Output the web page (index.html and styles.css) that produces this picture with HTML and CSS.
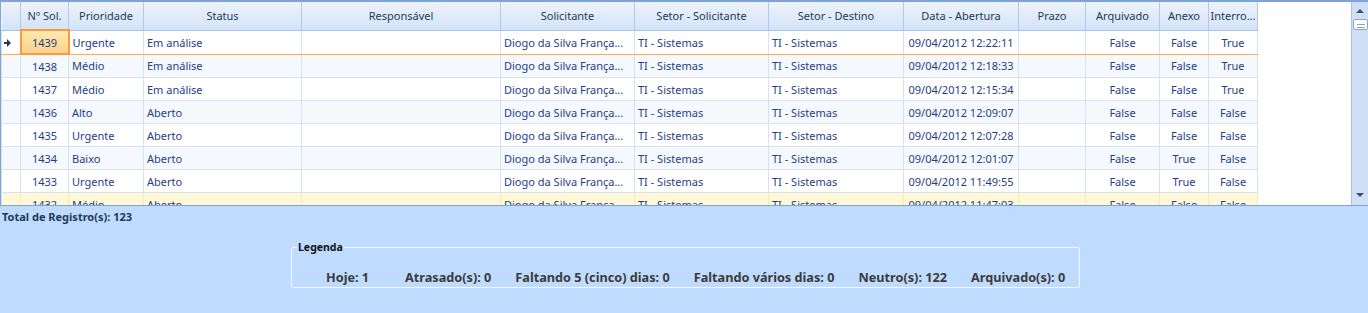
FILE: index.html
```html
<!DOCTYPE html>
<html>
<head>
<meta charset="utf-8">
<title>Solicitações</title>
<link rel="stylesheet" href="styles.css">
</head>
<body>
<div class="grid">
  <div class="view">
    <table class="data">
      <colgroup>
        <col style="width:19px"><col style="width:48px"><col style="width:75px"><col style="width:158px">
        <col style="width:199px"><col style="width:134px"><col style="width:134px"><col style="width:135px">
        <col style="width:115px"><col style="width:67px"><col style="width:74px"><col style="width:49px"><col style="width:49px">
      </colgroup>
      <thead>
        <tr>
          <th></th><th>Nº Sol.</th><th>Prioridade</th><th>Status</th><th>Responsável</th><th>Solicitante</th>
          <th>Setor - Solicitante</th><th>Setor - Destino</th><th>Data - Abertura</th><th>Prazo</th>
          <th>Arquivado</th><th>Anexo</th><th>Interro...</th>
        </tr>
      </thead>
      <tbody>
        <tr class="focused">
          <td class="ind"><span class="arrow"></span></td><td class="c cur">1439</td><td>Urgente</td><td>Em análise</td><td></td>
          <td>Diogo da Silva França...</td><td>TI - Sistemas</td><td>TI - Sistemas</td><td class="c">09/04/2012 12:22:11</td>
          <td></td><td class="c">False</td><td class="c">False</td><td class="c">True</td>
        </tr>
        <tr class="alt">
          <td class="ind"></td><td class="c">1438</td><td>Médio</td><td>Em análise</td><td></td>
          <td>Diogo da Silva França...</td><td>TI - Sistemas</td><td>TI - Sistemas</td><td class="c">09/04/2012 12:18:33</td>
          <td></td><td class="c">False</td><td class="c">False</td><td class="c">True</td>
        </tr>
        <tr>
          <td class="ind"></td><td class="c">1437</td><td>Médio</td><td>Em análise</td><td></td>
          <td>Diogo da Silva França...</td><td>TI - Sistemas</td><td>TI - Sistemas</td><td class="c">09/04/2012 12:15:34</td>
          <td></td><td class="c">False</td><td class="c">False</td><td class="c">True</td>
        </tr>
        <tr class="alt">
          <td class="ind"></td><td class="c">1436</td><td>Alto</td><td>Aberto</td><td></td>
          <td>Diogo da Silva França...</td><td>TI - Sistemas</td><td>TI - Sistemas</td><td class="c">09/04/2012 12:09:07</td>
          <td></td><td class="c">False</td><td class="c">False</td><td class="c">False</td>
        </tr>
        <tr>
          <td class="ind"></td><td class="c">1435</td><td>Urgente</td><td>Aberto</td><td></td>
          <td>Diogo da Silva França...</td><td>TI - Sistemas</td><td>TI - Sistemas</td><td class="c">09/04/2012 12:07:28</td>
          <td></td><td class="c">False</td><td class="c">False</td><td class="c">False</td>
        </tr>
        <tr class="alt">
          <td class="ind"></td><td class="c">1434</td><td>Baixo</td><td>Aberto</td><td></td>
          <td>Diogo da Silva França...</td><td>TI - Sistemas</td><td>TI - Sistemas</td><td class="c">09/04/2012 12:01:07</td>
          <td></td><td class="c">False</td><td class="c">True</td><td class="c">False</td>
        </tr>
        <tr>
          <td class="ind"></td><td class="c">1433</td><td>Urgente</td><td>Aberto</td><td></td>
          <td>Diogo da Silva França...</td><td>TI - Sistemas</td><td>TI - Sistemas</td><td class="c">09/04/2012 11:49:55</td>
          <td></td><td class="c">False</td><td class="c">True</td><td class="c">False</td>
        </tr>
        <tr class="hot">
          <td class="ind"></td><td class="c">1432</td><td>Médio</td><td>Aberto</td><td></td>
          <td>Diogo da Silva França...</td><td>TI - Sistemas</td><td>TI - Sistemas</td><td class="c">09/04/2012 11:47:03</td>
          <td></td><td class="c">False</td><td class="c">False</td><td class="c">False</td>
        </tr>
      </tbody>
    </table>
  </div>
  <div class="scroll">
    <span class="up"></span>
    <span class="thumb"></span>
    <span class="track"></span>
    <span class="down"></span>
  </div>
</div>

<div class="total">Total de Registro(s): 123</div>

<fieldset class="legend">
  <legend>Legenda</legend>
  <div class="items">
    <span class="first">Hoje: 1</span>
    <span>Atrasado(s): 0</span>
    <span>Faltando 5 (cinco) dias: 0</span>
    <span>Faltando vários dias: 0</span>
    <span>Neutro(s): 122</span>
    <span>Arquivado(s): 0</span>
  </div>
</fieldset>
</body>
</html>
```

FILE: styles.css
```css
body {
  margin: 0;
  background: #bfdbfe;
  font-family: "Noto Sans", "DejaVu Sans", sans-serif;
  font-size: 11px;
  overflow: hidden;
}

.grid {
  display: flex;
  height: 203px;
  background: #fff;
  border-top: 2px solid #7ea3d6;
  border-left: 1px solid #7ea3d6;
  border-bottom: 1px solid #7ea3d6;
}

.view {
  flex: 1;
  overflow: hidden;
}

.data {
  border-collapse: collapse;
  table-layout: fixed;
  width: 1256px;
  color: #1f3e86;
}

.data th {
  height: 27px;
  padding: 0;
  font-weight: normal;
  color: #1e395b;
  text-align: center;
  white-space: nowrap;
  overflow: hidden;
  background: linear-gradient(#edf3fc, #d3e3f7);
  border-left: 1px solid #f6f9fe;
  border-right: 1px solid #b4c9e6;
  border-bottom: 1px solid #a9c1e2;
}

.data td {
  height: 22px;
  padding: 0 3px;
  white-space: nowrap;
  overflow: hidden;
  border: 1px solid #d5e2f4;
  border-top: 0;
}

.data .c {
  text-align: center;
}

.alt td {
  background: #f5f9fe;
}

.hot td {
  background: #fff8d6;
  border-right-color: #fde9a4;
}

.focused td {
  border-top: 1px solid #ffe49a;
  border-bottom: 1px solid #f7b24e;
}

.data td.cur {
  background: linear-gradient(#ffe9b0, #fbd28c);
  border: 2px solid #f79b3c;
}

.data td.ind {
  padding: 0;
  text-align: center;
}

.arrow {
  display: inline-block;
  width: 0;
  height: 0;
  border-top: 4px solid transparent;
  border-bottom: 4px solid transparent;
  border-left: 4px solid #1e395b;
  position: relative;
  left: -2px;
}

.arrow::before {
  content: "";
  position: absolute;
  left: -7px;
  top: -1px;
  width: 3px;
  height: 2px;
  background: #1e395b;
}

.scroll {
  width: 16px;
  display: flex;
  flex-direction: column;
  align-items: center;
  background: #cfdff5;
  border-left: 1px solid #a9c4e8;
}

.up, .down {
  width: 0;
  height: 0;
  margin: 7px 0 6px;
  border-left: 4px solid transparent;
  border-right: 4px solid transparent;
}

.up {
  border-bottom: 4px solid #3c4f6e;
}

.down {
  border-top: 4px solid #3c4f6e;
  margin: 6px 0 8px;
}

.thumb {
  width: 13px;
  height: 9px;
  background: #fff repeating-linear-gradient(#fff 0 2px, #8c9fba 2px 3px) 3px 2px / 8px 7px no-repeat;
  border: 1px solid #8aa4c8;
  border-radius: 2px;
}

.track {
  flex: 1;
}

.total {
  padding: 3px 0 0 2px;
  font-weight: bold;
  color: #1e395b;
}

.legend {
  margin: 16px 0 0 291px;
  width: 787px;
  height: 46px;
  padding: 0;
  border: 1px solid #f3f8ff;
  border-radius: 2px;
  color: #333;
}

.legend legend {
  padding: 0 1px;
  margin-left: 5px;
  font-weight: bold;
  font-size: 10.5px;
  color: #111;
}

.items {
  display: flex;
  gap: 24px;
  padding: 14px 0 0 34px;
  font-weight: bold;
  font-size: 12.7px;
  color: #3b3b3b;
}

.items .first {
  width: 55px;
}
```
